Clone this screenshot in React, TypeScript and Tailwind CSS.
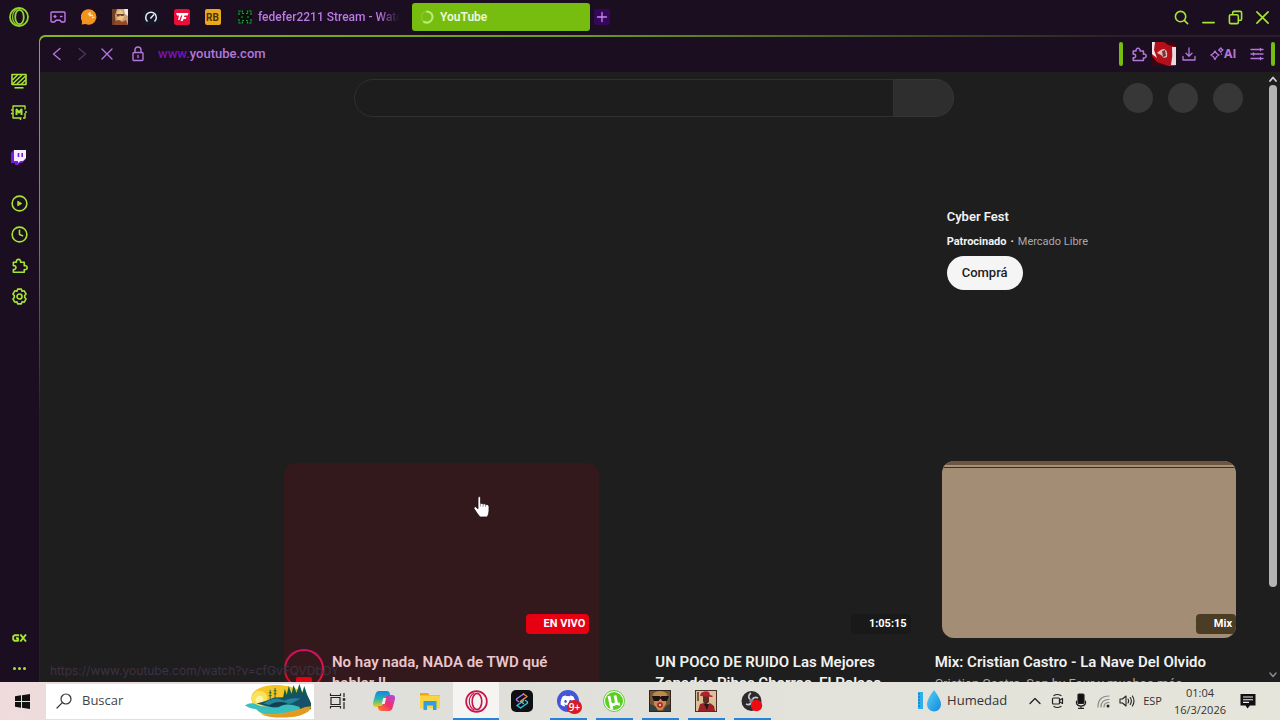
import type { ReactNode } from "react";
import { FaDiscord } from "react-icons/fa";

const line = {
  fill: "none",
  stroke: "currentColor",
  strokeLinecap: "round" as const,
  strokeLinejoin: "round" as const,
};

const PUZZLE =
  "M2.500 5.500h3.200a2.300 2.300 0 1 1 4.400 0H14v3.800a2.200 2.200 0 1 1 0 4V16.200H2.500v-3a2.100 2.100 0 1 0 0-4Z";

function OperaTop() {
  return (
    <svg viewBox="0 0 20 20" className="size-5" {...line}>
      <circle cx="10" cy="10" r="9" strokeWidth="1.800" />
      <ellipse cx="10.500" cy="10" rx="4.300" ry="7.200" strokeWidth="1.800" />
      <path d="M8 2.200C4.500 4 3.600 7 3.600 10s1 6 4.400 7.800" strokeWidth="1.200" />
    </svg>
  );
}

function Puzzle({ size = "size-4" }: { size?: string }) {
  return (
    <svg viewBox="0 0 18 18" className={size} {...line} strokeWidth="1.700">
      <path d={PUZZLE} />
    </svg>
  );
}

function PinnedIcons() {
  return (
    <div className="flex text-[#bd7bea]">
      <PinButton label="GX Corner">
        <svg viewBox="0 0 16 12" className="h-3 w-4" {...line} strokeWidth="1.400">
          <path d="M2 1h12a1 1 0 0 1 1 1v8a1 1 0 0 1-1 1h-2.500L10 9.300H6L4.500 11H2a1 1 0 0 1-1-1V2a1 1 0 0 1 1-1Z" />
          <path d="M4 5.500h2M5 4.500v2M10.500 5.500h1.500" />
        </svg>
      </PinButton>
      <PinButton label="Chat">
        <svg viewBox="0 0 16 16" className="size-4">
          <path d="M8 .3A7.700 7.700 0 1 1 4.500 15L.8 15.600 1 12A7.700 7.700 0 0 1 8 .3Z" fill="#f2941b" />
          <path d="M7 4.500l2 2M9 3v3.500h3M11 9l2.500-1" stroke="#ffe6bd" strokeWidth="1.300" fill="none" />
        </svg>
      </PinButton>
      <PinButton label="San Andreas">
        <svg viewBox="0 0 16 16" className="size-4">
          <rect width="16" height="16" fill="#c9a27c" />
          <path d="M0 0h5l-2 6 1 10H0Z" fill="#6e3f24" />
          <path d="M5 3q3-4 6 0l1 5-2 3H6L5 8Z" fill="#f2c37b" />
          <path d="M4.500 5h8l-1 2H9L8 6 7 7.500H5Z" fill="#6b4634" />
          <path d="M3 12l4-1 3 2 4-2 2 5H2Z" fill="#91492b" />
          <path d="M12 0h4v7l-3-2Z" fill="#f3ede5" />
        </svg>
      </PinButton>
      <PinButton label="Speed test">
        <svg viewBox="0 0 16 16" className="size-4">
          <rect width="16" height="16" rx="4" fill="#141526" />
          <path d="M4.500 12.500A5.300 5.300 0 1 1 11.500 12.500" fill="none" stroke="#f0eef7" strokeWidth="1.500" />
          <path d="M7.400 9.500 11 5.500" stroke="#f0eef7" strokeWidth="1.500" />
        </svg>
      </PinButton>
      <PinButton label="TF">
        <svg viewBox="0 0 16 16" className="size-4">
          <rect width="16" height="16" rx="2.500" fill="#e8103a" />
          <path d="M2 4h12.500l-1 2.500h-3L10 8h2.500l-.8 2H9.500l-.8 2H6.500L8.300 6.500H7L5.500 11H4l1-4.500H3Z" fill="#fff" />
        </svg>
      </PinButton>
      <PinButton label="RB">
        <span className="grid size-4 place-items-center rounded-xs bg-[#eba81c] text-[10px] font-bold text-[#4b3108]">
          RB
        </span>
      </PinButton>
    </div>
  );
}

function PinButton({ label, children }: { label: string; children: ReactNode }) {
  return (
    <button aria-label={label} className="grid h-7 w-[31px] place-items-center">
      {children}
    </button>
  );
}

function TabStrip() {
  return (
    <header className="flex h-[35px] shrink-0 items-center bg-[#1c0e21] pb-px">
      <button aria-label="Opera menu" className="grid h-7 w-[38px] shrink-0 place-items-center text-[#93d42b]">
        <OperaTop />
      </button>
      <div className="ml-1 shrink-0">
        <PinnedIcons />
      </div>
      <button className="ml-1.5 flex h-7 w-[166px] shrink-0 items-center gap-1.5 overflow-hidden pl-1 text-left text-[12px] font-medium text-[#bd7bea]">
        <svg viewBox="0 0 14 14" className="size-3.5 shrink-0">
          <rect width="14" height="14" fill="#07100b" />
          <path
            d="M1 5V1h3.500v2.500H6M13 5V1H9.500v2.500H8M1 9v4h3.500v-2.500H6M13 9v4H9.500v-2.500H8M3 7h2M9 7h2"
            fill="none"
            stroke="#1fa53c"
            strokeWidth="1.200"
            strokeDasharray="2.500 .8"
          />
        </svg>
        <span className="min-w-0 flex-1 overflow-hidden bg-linear-to-r from-[#bd7bea] from-85% to-[#1c0e21] bg-clip-text whitespace-nowrap text-transparent">
          fedefer2211 Stream - Watch
        </span>
      </button>
      <button className="ml-3 flex h-7 w-[178px] shrink-0 items-center gap-1.5 rounded-[3px] bg-[#77bd10] pl-2 text-[12px] font-semibold text-[#eef8dd]">
        <svg viewBox="0 0 14 14" className="size-3.5" {...line} strokeWidth="2">
          <circle cx="7" cy="7" r="5.600" stroke="#84c526" />
          <path d="M7 1.400A5.600 5.600 0 1 1 4 11.800" stroke="#b9ec77" />
        </svg>
        YouTube
      </button>
      <button aria-label="New tab" className="ml-1 grid size-4 place-items-center rounded-xs bg-[#35075a] text-[#c58bee]">
        <svg viewBox="0 0 12 12" className="size-3" {...line} strokeWidth="1.300">
          <path d="M6 1.500v9M1.500 6h9" />
        </svg>
      </button>
      <div className="ml-auto flex text-[#a6e532]">
        <WindowButton label="Search tabs">
          <circle cx="7" cy="7" r="5.500" />
          <path d="m11 11 3.500 3.500" />
        </WindowButton>
        <WindowButton label="Minimize">
          <path d="M2 13.500h12" />
        </WindowButton>
        <WindowButton label="Restore">
          <rect x="1.500" y="5" width="9.500" height="9.500" rx="1.500" />
          <path d="M5 4.500V3a1.500 1.500 0 0 1 1.500-1.500H13A1.500 1.500 0 0 1 14.500 3v6.500A1.500 1.500 0 0 1 13 11h-1.500" />
        </WindowButton>
        <WindowButton label="Close">
          <path d="m2 2 12 12M14 2 2 14" />
        </WindowButton>
        <span className="w-1" />
      </div>
    </header>
  );
}

function WindowButton({ label, children }: { label: string; children: ReactNode }) {
  return (
    <button aria-label={label} className="grid h-7 w-[27px] place-items-center">
      <svg viewBox="0 0 16 16" className="size-[15px]" {...line} strokeWidth="1.700">
        {children}
      </svg>
    </button>
  );
}

function SideButton({ label, children }: { label: string; children: ReactNode }) {
  return (
    <button aria-label={label} className="grid h-[31px] w-full place-items-center">
      {children}
    </button>
  );
}

function SideBar() {
  return (
    <nav className="flex w-[39px] shrink-0 flex-col bg-[#1c0e21] pt-[30px] pr-px text-[#a6e532]">
      <SideButton label="Wallpapers">
        <svg viewBox="0 0 16 16" className="size-4" {...line} strokeLinecap="butt" strokeWidth="1.600">
          <rect x="1" y="1.500" width="14" height="10" />
          <path d="m1.500 7 5-5M1.500 11 11 2M6 11l8.500-8M10 11.500l4.500-4.500" strokeWidth="1.500" />
          <path d="M3.500 14.800h9" strokeWidth="1.600" />
        </svg>
      </SideButton>
      <SideButton label="Mods">
        <svg viewBox="0 0 16 16" className="size-4" {...line} strokeLinecap="butt" strokeWidth="1.400">
          <path d="M10.500 14H2V2h12v3.500M14 9v5h-2M0 6h2M0 9.500h2M14 8h2M9.500 14v2" />
          <path d="M5.500 11V5.500L8 8.500l2.500-3V11" strokeWidth="2" />
        </svg>
      </SideButton>
      <div className="mt-3.5">
        <SideButton label="Twitch">
          <svg viewBox="0 0 16 16" className="size-4">
            <path d="M0 4 3 1h12v9l-4 4H9l-2 2H4v-2H0Z" fill="#7d17e6" />
            <path d="M3 1h12v8l-3 3H9.500L7 14v-2H3Z" fill="#f8effe" />
            <path d="M7.500 4v4M11.200 4v4" stroke="#7d17e6" strokeWidth="1.600" />
          </svg>
        </SideButton>
      </div>
      <div className="mt-4">
        <SideButton label="Player">
          <svg viewBox="0 0 18 18" className="size-[17px]" {...line} strokeWidth="1.700">
            <circle cx="9" cy="9" r="7.800" />
            <path d="m7.500 6.800 3.800 2.200-3.800 2.200Z" fill="currentColor" strokeWidth="1" />
          </svg>
        </SideButton>
        <SideButton label="History">
          <svg viewBox="0 0 18 18" className="size-[17px]" {...line} strokeWidth="1.700">
            <circle cx="9" cy="9" r="7.800" />
            <path d="M9 4.500V9l3.200 1.200" />
          </svg>
        </SideButton>
        <SideButton label="Extensions">
          <Puzzle size="size-[17px]" />
        </SideButton>
        <SideButton label="Settings">
          <svg viewBox="0 0 18 18" className="size-[17px]" {...line} strokeWidth="1.700">
            <path d="M7 1.200h4l.7 2.200 2.300-.4 2 3.400L14.500 8v2l1.500 1.600-2 3.400-2.300-.4-.7 2.200H7l-.7-2.200-2.300.4-2-3.400L3.500 10V8L2 6.400 4 3l2.300.4Z" />
            <circle cx="9" cy="9" r="2.700" />
          </svg>
        </SideButton>
      </div>
      <div className="mt-auto">
        <button aria-label="GX" className="mb-1 grid h-[27px] w-full place-items-center">
          <svg viewBox="0 0 15 8" className="h-2 w-[15px]" {...line} strokeWidth="1.900" strokeLinecap="butt">
            <path d="M7 1.200H2.500L1.200 2.500v3l1.300 1.300H6V4.200H4" />
            <path d="m8.300.5 5.700 7M14 .5l-5.700 7" />
          </svg>
        </button>
        <button aria-label="More" className="grid h-[27px] w-full place-items-center">
          <svg viewBox="0 0 13 3" className="h-[3px] w-[13px]" fill="currentColor">
            <circle cx="1.500" cy="1.500" r="1.500" />
            <circle cx="6.500" cy="1.500" r="1.500" />
            <circle cx="11.500" cy="1.500" r="1.500" />
          </svg>
        </button>
      </div>
    </nav>
  );
}

function BarButton({ label, children }: { label: string; children: ReactNode }) {
  return (
    <button aria-label={label} className="grid h-7 w-[25px] place-items-center">
      {children}
    </button>
  );
}

function AddressBar() {
  return (
    <div className="flex h-[35px] shrink-0 items-center bg-[#1c0e21] pr-[5px] pb-px text-[#b277dc]">
      <div className="ml-1 flex">
        <BarButton label="Back">
          <svg viewBox="0 0 14 14" className="size-3.5" {...line} strokeWidth="1.400">
            <path d="M10 1.500 3.500 7l6.500 5.500" />
          </svg>
        </BarButton>
        <BarButton label="Forward">
          <svg viewBox="0 0 14 14" className="size-3.5 text-[#4f3360]" {...line} strokeWidth="1.400">
            <path d="M4 1.500 10.500 7 4 12.500" />
          </svg>
        </BarButton>
        <BarButton label="Stop">
          <svg viewBox="0 0 14 14" className="size-3.5" {...line} strokeWidth="1.400">
            <path d="m2 2 10 10M12 2 2 12" />
          </svg>
        </BarButton>
      </div>
      <button aria-label="Site information" className="ml-1.5 grid h-7 w-[25px] place-items-center">
        <svg viewBox="0 0 14 16" className="h-4 w-3.5" {...line} strokeWidth="1.400">
          <rect x="2" y="6.500" width="10" height="8" rx="1" />
          <path d="M4 6.500V4a3 3 0 0 1 6 0v2.500M7 9.500v2" />
        </svg>
      </button>
      <button className="ml-2 text-[13px] font-medium">
        <span className="text-[#7a12bb]">www.</span>youtube.com
      </button>
      <div className="ml-auto flex items-center">
        <span className="mr-1 h-6 w-1 rounded-xs bg-[#77bd10]" />
        <BarButton label="Extensions">
          <Puzzle />
        </BarButton>
        <BarButton label="Profile">
          <svg viewBox="0 0 24 24" className="size-6">
            <rect width="24" height="24" rx="2" fill="#b3101c" />
            <path d="M0 0h3L2 8l3 8-5-4Z" fill="#f0e8ec" />
            <path d="M20 5h4v18h-5q2-9 1-18Z" fill="#e9d9df" />
            <path d="M12 0h12v5l-8-2Z" fill="#3a0710" />
            <path d="M0 14 5 20 16 24H0Z" fill="#3a0710" />
            <path d="M5 11q4-4 7-4 4 1 3 8l-3 1-3-3Z" fill="#e8b9ae" />
            <path d="m10 9 3-1 1 6-3 1Z" fill="#6b3b42" />
          </svg>
        </BarButton>
        <BarButton label="Downloads">
          <svg viewBox="0 0 14 14" className="size-3.5" {...line} strokeWidth="1.300">
            <path d="M7 1v8M4 6.200 7 9.200l3-3M1 9.500V13h12V9.500" />
          </svg>
        </BarButton>
        <button className="ml-2 flex h-7 items-center font-[Inter] text-[12px] font-bold">
          <svg viewBox="0 0 14 14" className="size-3.5" {...line} strokeWidth="1.300">
            <path d="M5 4q1.200 3 4 4-2.800 1-4 4.500Q3.800 9 .8 8 3.800 7 5 4Z" />
            <path d="M10.800.8q.6 1.500 2.200 2.200-1.600.7-2.200 2.200Q10.200 3.700 8.600 3q1.600-.7 2.200-2.200ZM11.500 7v.2" />
          </svg>
          AI
        </button>
        <div className="ml-2">
          <BarButton label="Easy setup">
            <svg viewBox="0 0 14 14" className="size-3.5" {...line} strokeWidth="1.300">
              <path d="M1 2.500h12M1 7h12M1 11.500h12M10.500 1.300v2.400M3.500 5.800v2.400M10.500 10.300v2.400" />
            </svg>
          </BarButton>
        </div>
        <span className="ml-0.5 h-6 w-1 rounded-xs bg-[#77bd10]" />
      </div>
    </div>
  );
}

function Badge({ text, tone }: { text: string; tone: string }) {
  return (
    <span className={`flex h-5 items-center rounded-sm pr-1 pl-[18px] text-[11px] font-bold text-white ${tone}`}>
      {text}
    </span>
  );
}

function Page() {
  return (
    <main className="min-w-0 flex-1 overflow-hidden font-[Roboto,'Liberation_Sans',sans-serif]">
      <div className="flex h-[51px] items-center">
        <div className="flex-1 pl-6" />
        <form className="flex h-[38px] w-[600px]">
          <input
            aria-label="Search"
            className="min-w-0 flex-1 rounded-l-full border border-[#303030] bg-[#1d1d1d] px-4 outline-none"
          />
          <button
            type="button"
            aria-label="Submit search"
            className="w-[60px] rounded-r-full border border-l-0 border-[#363636] bg-[#2e2e2e]"
          />
        </form>
        <div className="flex flex-1 justify-end gap-[15px] pr-6">
          <span className="size-[30px] rounded-full bg-[#373737]" />
          <span className="size-[30px] rounded-full bg-[#373737]" />
          <span className="size-[30px] rounded-full bg-[#373737]" />
        </div>
      </div>

      <div className="grid grid-cols-3 gap-x-3.5 pr-[21px] pl-[244px]">
        <section className="col-start-3 h-[340px] pt-[84px] pl-3">
          <h3 className="text-[13px] leading-5 font-semibold text-[#f1f1f1]">Cyber Fest</h3>
          <p className="mt-[5px] flex gap-1 text-[11px] leading-5 text-[#aaaaaa]">
            <b className="font-bold text-[#f1f1f1]">Patrocinado</b>
            <b className="text-[#f1f1f1]">·</b>
            <span>Mercado Libre</span>
          </p>
          <button className="mt-1 h-[34px] rounded-full bg-[#f5f5f5] px-[15px] text-[13px] font-medium text-[#1c1c1c]">
            Comprá
          </button>
        </section>

        <article className="-mr-1 rounded-t-xl bg-[#34191c] text-[#eac6ca]">
          <div className="flex h-[175px] items-end justify-end pr-2.5 pb-1">
            <Badge text="EN VIVO" tone="bg-[#e60012]" />
          </div>
          <div className="flex gap-2 pt-2">
            <span className="mt-[3px] grid size-10 shrink-0 place-items-center rounded-full bg-[conic-gradient(#d0126f,#e3133a,#d0102a,#d0126f)] p-0.5">
              <span className="flex size-full flex-col items-center justify-end rounded-full bg-[#34191c]">
                <span className="mb-0.5 h-2 w-4 rounded-xs bg-[#e60012]" />
              </span>
            </span>
            <h3 className="pt-1.5 text-[15px] leading-[21px] font-semibold">
              No hay nada, NADA de TWD qué
              <br />
              hablar !!
            </h3>
          </div>
        </article>

        <article className="text-[#f1f1f1]">
          <div className="flex h-[175px] items-end justify-end pr-2.5 pb-1">
            <Badge text="1:05:15" tone="bg-[#191919]" />
          </div>
          <h3 className="pt-3.5 pl-[46px] text-[15px] leading-[21px] font-semibold">
            UN POCO DE RUIDO Las Mejores
            <br />
            Zapadas Pibes Chorros, El Polaco
          </h3>
        </article>

        <article className="-mt-0.5 text-[#f1f1f1]">
          <div className="mr-2.5 ml-[7px] overflow-hidden rounded-xl bg-[#a38d74]">
            <div className="h-1 bg-[#6d5744]" />
            <div className="h-[3px] border-b border-[#3b3028] bg-[#a89177]" />
            <div className="flex h-[170px] items-end justify-end pb-1">
              <Badge text="Mix" tone="bg-[#4b3c25]" />
            </div>
          </div>
          <h3 className="pt-3.5 text-[15px] leading-[21px] font-semibold">Mix: Cristian Castro - La Nave Del Olvido</h3>
          <p className="text-[13px] leading-[21px] text-[#aaaaaa]">Cristian Castro, Son by Four y muchos más</p>
        </article>
      </div>
    </main>
  );
}

function ScrollBar() {
  return (
    <div className="flex w-[13px] shrink-0 flex-col items-center py-1 pr-px">
      <svg viewBox="0 0 8 6" className="h-1.5 w-2 text-[#d0d0d0]" {...line} strokeWidth="1.800">
        <path d="M1 5 4 1.500 7 5" />
      </svg>
      <div className="mt-[3px] h-5/6 w-2 rounded-full bg-[#b3b3b3]" />
      <svg viewBox="0 0 8 6" className="mt-auto h-1.5 w-2 text-[#8a8a8a]" {...line} strokeWidth="1.500">
        <path d="M1 1 4 4.500 7 1" />
      </svg>
    </div>
  );
}

function HandCursor() {
  return (
    <svg viewBox="0 0 18 24" className="absolute top-[423px] left-[433px] h-6 w-[18px]">
      <path
        d="M5 2.400q1.300-1.600 2.600 0V8.500q1.600-.6 2.500.5 1.700-.6 2.500.6 2.400-.6 3.400 1.400V16q0 3-1.700 6H7Q4 18.500 1 13.500q-.2-2 1.700-1.700l2.300 2Z"
        fill="#fff"
        stroke="#241013"
        strokeWidth=".8"
      />
      <path d="M7.600 8.500v3M10.100 9.200V12M12.600 10v2" stroke="#5c4a4c" strokeWidth=".6" />
    </svg>
  );
}

function TaskButton({
  label,
  state = "idle",
  children,
}: {
  label: string;
  state?: "idle" | "open" | "active";
  children: ReactNode;
}) {
  const tone =
    state === "active"
      ? "bg-[#f6f4f3] after:h-0.5 after:w-full after:bg-[#2583dc]"
      : state === "open"
        ? "after:h-0.5 after:w-[37px] after:bg-[#2583dc]"
        : "after:h-0.5";
  return (
    <button
      aria-label={label}
      className={`flex h-full w-[46px] flex-col items-center justify-between pt-2 after:block after:content-[''] ${tone}`}
    >
      {children}
    </button>
  );
}

function SearchArt() {
  return (
    <svg viewBox="0 0 72 36" className="h-[35px] w-[72px]">
      <path d="M10 20C4 8 18 1 34 1s34 6 34 20S50 34 38 34 14 31 10 20Z" fill="#f5c526" />
      <circle cx="17" cy="15" r="8" fill="#fbe25c" />
      <circle cx="17" cy="16" r="4" fill="#fff3a6" />
      <path d="M41 15 43 5l2 6 2-9 3 8 2-9 3 8 3-9 3 9 2-7 3 9 4 9v6H40Z" fill="#0f5b50" />
      <path d="M14 20q10-2 18-6 10 0 18-2 9-4 14-1 7 6 5 12l-30 4Z" fill="#18506a" />
      <path d="M26 17q8-4 16 0 8-3 17-2l-9 5-20 2-9-2Z" fill="#22859a" />
      <path d="M30 20q8-3 16 0l-6 3-16 1Z" fill="#123f50" />
      <path d="M2 22q6-4 12-1t12 2q8 3 14-1 8-2 16 1 4 1 2 3-6 3-14 4l-14 1q-12 1-16-5-6 0-12-4Z" fill="#38bfc0" />
      <path d="M18 31q12 1 22-1t18-4q6-3 12-3 0 8-20 11-20 2-32-3Z" fill="#e39a21" />
      <path d="M28 6v11M26.500 9h3M26.500 12h3M33 4v11M31.500 7h3M31.500 10h3" stroke="#2d6540" strokeWidth="1" />
    </svg>
  );
}

function TaskBar() {
  return (
    <footer className="flex h-[38px] shrink-0 items-center bg-linear-to-r from-[#efdbdd] via-[#dfdfdb] via-30% to-[#e6e5da] font-['Open_Sans','Noto_Sans',sans-serif] text-[#333333]">
      <button aria-label="Start" className="grid h-full w-[46px] shrink-0 place-items-center pr-px text-[#111]">
        <svg viewBox="0 0 15 15" className="size-[15px]" fill="currentColor">
          <path d="M0 2.200 6 1.300V7H0ZM7 1.200 15 0v7H7ZM0 8h6v5.700l-6-.9ZM7 8h8v7l-8-1.200Z" />
        </svg>
      </button>
      <label className="flex h-[35px] w-[268px] shrink-0 items-center bg-white pl-2.5">
        <svg viewBox="0 0 16 16" className="size-4 text-[#333]" {...line} strokeWidth="1.200">
          <circle cx="10" cy="6" r="5" />
          <path d="M6.300 9.700 1 15" />
        </svg>
        <input
          aria-label="Buscar"
          placeholder="Buscar"
          className="ml-2.5 min-w-0 flex-1 bg-transparent text-[13px] outline-none placeholder:text-[#444444]"
        />
        <SearchArt />
      </label>
      <div className="ml-px flex h-full shrink-0">
        <TaskButton label="Task view">
          <svg viewBox="0 0 18 18" className="mt-0.5 size-[18px]" fill="none" stroke="#222" strokeWidth="1.200">
            <path d="M2 5.500h9v7H2ZM1.500 1.500v2H11.500v-2M1.500 16.500v-2H11.500v2M15 1v4M15 10v7" />
            <path d="M13.700 6.200h2.600v2.600h-2.600Z" fill="#222" stroke="none" />
          </svg>
        </TaskButton>
        <TaskButton label="Copilot">
          <svg viewBox="0 0 24 22" className="h-[22px] w-6">
            <defs>
              <linearGradient id="cpA" x1="0" y1="0" x2="0" y2="1">
                <stop offset="0" stopColor="#1584e8" />
                <stop offset=".5" stopColor="#28b6a8" />
                <stop offset="1" stopColor="#f2d21a" />
              </linearGradient>
              <linearGradient id="cpB" x1="1" y1="0" x2="0" y2="1">
                <stop offset="0" stopColor="#a94ff0" />
                <stop offset=".5" stopColor="#f02f6a" />
                <stop offset="1" stopColor="#ff8a1e" />
              </linearGradient>
            </defs>
            <path d="M7 1h8q2 0 2.700 2l.8 3h-3q-2 0-2.700 2.200L11 14q-.8 3-3.500 3H4q-4 0-2.800-5L3.500 4Q4.500 1 7 1Z" fill="url(#cpA)" />
            <path d="M17 21H9q-2 0-2.700-2l-.8-3h3q2 0 2.700-2.200L13 8q.8-3 3.500-3H20q4 0 2.800 5l-2.300 8q-1 3-3.500 3Z" fill="url(#cpB)" />
            <path d="M11.200 8h3l-1.500 6H9.800Z" fill="#f5eef0" />
          </svg>
        </TaskButton>
        <TaskButton label="File Explorer">
          <svg viewBox="0 0 20 20" className="mt-px size-5">
            <path d="M0 2h8l1.500 2H20v5H0Z" fill="#f2a51b" />
            <rect y="4.500" width="20" height="13" fill="#fbd444" />
            <path d="M3.500 10h13v9h-3.500v-4.500H7V19H3.500Z" fill="#2f9fe0" />
          </svg>
        </TaskButton>
        <TaskButton label="Opera GX" state="active">
          <svg viewBox="0 0 24 24" className="size-[23px]" fill="none" stroke="#c5174b">
            <circle cx="12" cy="12" r="10.800" strokeWidth="1.800" />
            <ellipse cx="12.500" cy="12" rx="5" ry="8.500" strokeWidth="1.700" />
            <path d="M9.500 3.200Q4.500 6 4.500 12t5 8.800" strokeWidth="1.200" />
          </svg>
        </TaskButton>
        <TaskButton label="Streamlabs">
          <svg viewBox="0 0 22 22" className="size-[22px]" fill="none" strokeWidth="1.500" strokeLinejoin="round" strokeLinecap="round">
            <rect width="22" height="22" rx="5" fill="#0e1014" />
            <path d="M12.500 4 6 8.500q-1 1 0 2l1.500 1" stroke="#a877ee" />
            <path d="m12.500 4 3.500 2.500-6.500 4.800 3 2.200" stroke="#f08a45" />
            <path d="M9.500 18 16 13.500q1-1 0-2l-1.500-1M9.500 18 6 15.500l6.500-4.800" stroke="#2fc5e4" />
          </svg>
        </TaskButton>
        <TaskButton label="Discord" state="open">
          <span className="relative grid size-[22px] place-items-center rounded-full bg-[#4455d6]">
            <FaDiscord className="size-4 text-white" />
            <span className="absolute top-2.5 left-2.5 grid h-3.5 w-[15px] place-items-center rounded-full bg-[#d61a26] text-[10px] font-semibold text-white">
              9+
            </span>
          </span>
        </TaskButton>
        <TaskButton label="uTorrent" state="open">
          <svg viewBox="0 0 22 22" className="size-[22px]">
            <circle cx="11" cy="11" r="10.500" fill="#fff" stroke="#67c83e" />
            <circle cx="11" cy="11" r="9" fill="#58d020" />
            <path d="M6 6 7.200 12q.8 3.500 4 2.500 2.500-1 2-3.500L12 5.500M13 11.500q.8 3 4 2.500M7.300 13l1.700 6.500" fill="none" stroke="#fff" strokeWidth="2.800" />
          </svg>
        </TaskButton>
        <TaskButton label="GTA San Andreas" state="open">
          <svg viewBox="0 0 22 22" className="size-[22px]">
            <rect width="22" height="22" fill="#30251e" />
            <path d="M1 1h20v20H1Z" fill="#76552f" />
            <path d="M5 5q6-5 12 0v9l-4 6H9l-4-5Z" fill="#ce8452" />
            <path d="M3 6q2-5 8-5t8 5l-3-1H7Z" fill="#b98a4b" />
            <path d="M3 6h7.500l1 1 1-1H20l-2 5h-4.500L11.500 8.500 9.500 11H5Z" fill="#171316" />
            <circle cx="11" cy="15" r="2.800" fill="#a0241d" />
            <circle cx="11" cy="15" r="1.200" fill="#e9c0a4" />
            <path d="M1 14l5 2 3 5H1ZM21 14l-4 2-3 5h7Z" fill="#33413b" />
          </svg>
        </TaskButton>
        <TaskButton label="GTA launcher" state="open">
          <svg viewBox="0 0 22 22" className="size-[22px]">
            <rect width="22" height="22" fill="#46342a" />
            <path d="M1 1h20v20H1Z" fill="#dcc09a" />
            <path d="M8 6h6v6l-2 2H9l-1-3Z" fill="#5b2e22" />
            <path d="M6 3q4-3 8-1l1 3 3 1-1 1-12-1Z" fill="#b3202a" />
            <path d="M3 21l2-7 4-1 3 2 3-2 4 3 1 5Z" fill="#9c2227" />
            <path d="m9 14 3 6 2-6Z" fill="#261717" />
            <path d="M2 2h2v9H2Z" fill="#7e5a3e" />
          </svg>
        </TaskButton>
        <TaskButton label="OBS Studio" state="open">
          <svg viewBox="0 0 22 22" className="size-[22px]">
            <circle cx="10.500" cy="11" r="10" fill="#2b2a2d" />
            <path d="M10 3q-4 3-1 6.500M17 8q-4-2-6 2M5 14q4 2 6-2" stroke="#c9c9cc" strokeWidth="1.700" fill="none" />
            <circle cx="10.500" cy="11" r="2.200" fill="#8a8a8e" />
            <circle cx="15.500" cy="15.500" r="5.700" fill="#ed0c12" />
          </svg>
        </TaskButton>
      </div>

      <div className="ml-auto flex h-full shrink-0 items-center">
        <button className="flex items-center gap-[5px] text-[13px]">
          <svg viewBox="0 0 25 24" className="h-6 w-[25px]">
            <defs>
              <linearGradient id="drop" x1="0" y1="0" x2="1" y2="1">
                <stop offset="0" stopColor="#55d0f7" />
                <stop offset="1" stopColor="#1089dc" />
              </linearGradient>
            </defs>
            <path d="M1 3h5v17H1Z" fill="#2bb0ee" />
            <path d="M1 5h2M1 8h2M1 11h2M1 14h2M1 17h2" stroke="#1565a0" />
            <path d="M17 1q7 9 7 14.500a7 7 0 0 1-14 0Q10 10 17 1Z" fill="url(#drop)" />
          </svg>
          Humedad
        </button>
        <div className="ml-5 flex items-center gap-[7px] text-[#222]">
          <button aria-label="Hidden icons" className="grid h-7 w-4 place-items-center">
            <svg viewBox="0 0 12 8" className="h-2 w-3" {...line} strokeWidth="1.300">
              <path d="M1 6.500 6 1.500l5 5" />
            </svg>
          </button>
          <button aria-label="Meet now" className="grid h-7 w-4 place-items-center">
            <svg viewBox="0 0 14 16" className="h-4 w-3.5" {...line} strokeWidth="1.200">
              <path d="M3 2.500q3-2 7 0M3 13.500q3 2 7 0" />
              <rect x="1.500" y="5" width="7" height="6" rx="1" />
              <path d="m8.500 7.300 3-1.800v5l-3-1.800" />
            </svg>
          </button>
          <button aria-label="Microphone" className="grid h-7 w-4 place-items-center">
            <svg viewBox="0 0 14 16" className="h-4 w-3.5" {...line} strokeWidth="1.200">
              <rect x="4" y="1" width="6" height="9.500" rx="1" fill="#111" />
              <path d="M2.500 8v2.500q1 2.500 4.500 2.500t4.500-2.500V8M7 13v2.300M4.500 15.300h5" />
            </svg>
          </button>
          <button aria-label="Network" className="grid h-7 w-4 place-items-center">
            <svg viewBox="0 0 14 14" className="size-3.5 text-[#888]" {...line} strokeWidth="1.200">
              <path d="M1 13Q1 2 12 2M4 13q0-7.500 8-7.500M7 13q0-4.500 5-4.500" />
              <circle cx="11" cy="12" r="1.500" fill="#222" stroke="none" />
            </svg>
          </button>
          <button aria-label="Volume" className="grid h-7 w-4 place-items-center">
            <svg viewBox="0 0 16 14" className="h-3.5 w-4" {...line} strokeWidth="1.100">
              <path d="M1 5h2.500L7 2v10L3.500 9H1ZM9 5q1.200 2 0 4M11.200 3.500q2.300 3.500 0 7M13.400 2q3.200 5 0 10" />
            </svg>
          </button>
        </div>
        <button className="ml-2 text-[11px]">ESP</button>
        <button className="ml-3 text-center text-[11px] leading-[17px]">
          <span className="block">01:04</span>
          <span className="block">16/3/2026</span>
        </button>
        <button aria-label="Notifications" className="mr-6 ml-3.5 grid h-7 w-4 place-items-center">
          <svg viewBox="0 0 16 16" className="size-4">
            <path d="M.5 1h15v11.500H10L7.500 15.500 5.500 12.500h-5Z" fill="#111" />
            <path d="M3 4h10M3 6.700h10M3 9.400h6" stroke="#eee" strokeWidth="1.100" />
          </svg>
        </button>
      </div>
    </footer>
  );
}

export default function App() {
  return (
    <div className="flex h-screen flex-col overflow-hidden bg-[#1c0e21] font-[Roboto,'Liberation_Sans',sans-serif]">
      <TabStrip />
      <div className="flex min-h-0 flex-1">
        <SideBar />
        <div className="flex min-w-0 flex-1 rounded-tl-md bg-[radial-gradient(ellipse_1080px_380px_at_top_left,#7fb526,#6b9a22_50%,#2a1f26)] pt-0.5 pl-px">
          <div className="flex min-w-0 flex-1 flex-col overflow-hidden rounded-tl-md bg-[#1e1e1e]">
            <AddressBar />
            <div className="relative flex min-h-0 flex-1">
              <Page />
              <ScrollBar />
              <HandCursor />
              <div className="absolute bottom-0 left-0 h-[23px] pl-2.5 font-[Inter] text-[12px] leading-[23px] text-[#3d3143]">
                https://www.youtube.com/watch?v=cfGvFQVDbDY
              </div>
            </div>
          </div>
        </div>
      </div>
      <TaskBar />
    </div>
  );
}
